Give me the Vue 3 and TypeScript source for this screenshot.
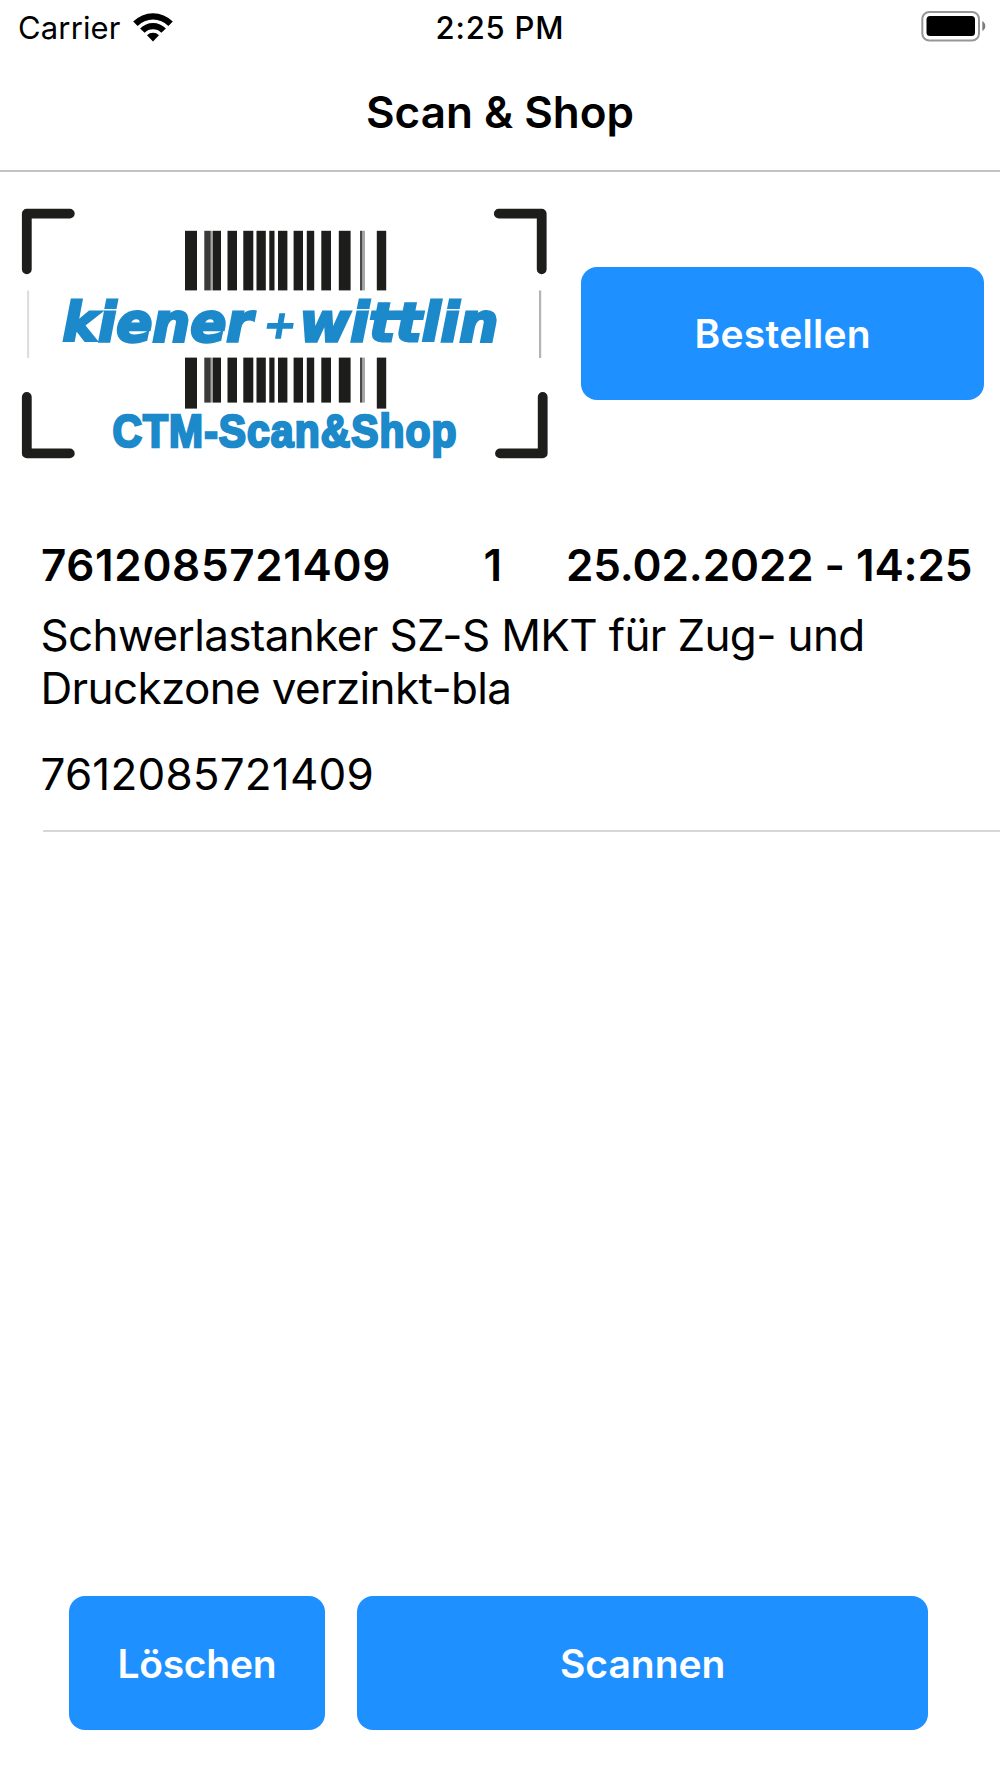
<script setup lang="ts">
interface Entry {
  code: string
  amount: number
  date: string
  description: string
  article: string
}

interface Bar {
  x: number
  w: number
  fill?: string
  long?: boolean
}

const entries: Entry[] = [
  {
    code: '7612085721409',
    amount: 1,
    date: '25.02.2022 - 14:25',
    description: 'Schwerlastanker SZ-S MKT für Zug- und Druckzone verzinkt-bla',
    article: '7612085721409',
  },
]

const bars: Bar[] = [
  { x: 185, w: 12, long: true },
  { x: 204.3, w: 6.5, fill: '#3a3a38' },
  { x: 210.8, w: 2, fill: '#a5a5a5' },
  { x: 212.8, w: 8.2 },
  { x: 227.5, w: 9.5 },
  { x: 243.3, w: 10 },
  { x: 256.5, w: 9.3 },
  { x: 269.3, w: 5.2 },
  { x: 278, w: 9.4 },
  { x: 293.6, w: 9.4 },
  { x: 306.8, w: 7.4 },
  { x: 321.3, w: 9.7 },
  { x: 338.8, w: 11.8 },
  { x: 360, w: 2.6, fill: '#4a4a48' },
  { x: 362.6, w: 2.4, fill: '#a8a8a8' },
  { x: 376.8, w: 9.4, long: true },
]
</script>

<template>
  <div class="screen">
    <header>
      <div class="status">
        <div class="carrier">
          <span class="carrier-name">Carrier</span>
          <svg class="wifi" width="42" height="32" viewBox="132 11 42 32">
            <path d="M133.2 21.6a27.9 27.9 0 0 1 39.6 0l-4.4 4.3a21.8 21.8 0 0 0-30.8 0z" />
            <path d="M140.1 28.4a18.2 18.2 0 0 1 25.8 0l-4.5 4.4a11.9 11.9 0 0 0-16.8 0z" />
            <path d="M147 35.2a8.5 8.5 0 0 1 12 0l-6 6.2z" />
          </svg>
        </div>
        <span class="time">2:25 PM</span>
        <svg class="battery" width="66" height="32" viewBox="921 10 66 32">
          <rect x="922.3" y="12" width="56.7" height="28.6" rx="7" fill="none" stroke="#969696" stroke-width="2" />
          <rect x="926.5" y="16" width="48.5" height="20" rx="3.5" />
          <path d="M982.3 21c4 2 4 8 0 10z" fill="#7d7d7d" />
        </svg>
      </div>
      <h1><span>Scan &amp; Shop</span></h1>
    </header>

    <section class="top">
      <svg class="logo" width="530" height="256" viewBox="20 206 530 256">
        <g fill="none" stroke="#1d1d1b" stroke-width="9.8" stroke-linecap="round" stroke-linejoin="round">
          <path d="M69.8 213.6H26.8V269.3" />
          <path d="M498.8 213.6H541.7V269.3" />
          <path d="M26.8 397V453.4H69.8" />
          <path d="M500 453.4H542.7V397" />
        </g>
        <rect x="27" y="290.5" width="2.2" height="67.5" fill="#dedede" />
        <rect x="539" y="290.5" width="2.2" height="67.5" fill="#b3b3b3" />
        <g v-for="bar in bars" :key="bar.x" :fill="bar.fill ?? '#1d1d1b'">
          <rect :x="bar.x" y="230.8" :width="bar.w" height="59.6" />
          <rect :x="bar.x" y="357.6" :width="bar.w" :height="bar.long ? 51 : 45" />
        </g>
        <g class="brand">
          <text x="62.5" y="340.8" textLength="190" lengthAdjust="spacingAndGlyphs">kiener</text>
          <text class="plus" x="262" y="341" textLength="36" lengthAdjust="spacingAndGlyphs">+</text>
          <text x="299.5" y="340.8" textLength="199" lengthAdjust="spacingAndGlyphs">wittlin</text>
        </g>
        <text class="product" x="112.5" y="447.3" textLength="345" lengthAdjust="spacingAndGlyphs">CTM-Scan&amp;Shop</text>
      </svg>
      <button class="order" type="button"><span>Bestellen</span></button>
    </section>

    <main>
      <article v-for="entry in entries" :key="entry.code">
        <div class="head">
          <span class="code">{{ entry.code }}</span>
          <span class="amount">{{ entry.amount }}</span>
          <span class="date">{{ entry.date }}</span>
        </div>
        <p class="description">{{ entry.description }}</p>
        <p class="number">{{ entry.article }}</p>
      </article>
    </main>

    <footer>
      <button class="delete" type="button"><span>Löschen</span></button>
      <button class="scan" type="button"><span>Scannen</span></button>
    </footer>
  </div>
</template>

<style>
body {
  background: #fff;
}
</style>

<style scoped>
.screen {
  display: flex;
  flex-direction: column;
  box-sizing: border-box;
  width: 1000px;
  height: 1778px;
  overflow: hidden;
  background: #fff;
  color: #000;
  font-family: Inter, 'Liberation Sans', sans-serif;
}

header {
  box-sizing: border-box;
  height: 172px;
  border-bottom: 2px solid #c3c3c3;
}

.status {
  display: grid;
  grid-template-columns: 1fr auto 1fr;
  height: 54px;
  padding: 0 13px 0 18px;
  font-size: 31px;
  line-height: 56px;
}

.carrier {
  display: flex;
  gap: 11px;
  letter-spacing: 0.15px;
}

.wifi,
.battery {
  margin-top: 11px;
}

.battery {
  margin-top: 10px;
  justify-self: end;
}

.time {
  font-weight: 500;
  letter-spacing: 0.8px;
  margin-right: 5px;
}

h1 {
  margin: 0;
  height: 116px;
  text-align: center;
  font-size: 44px;
  font-weight: 600;
  line-height: 116px;
}

.top {
  display: flex;
  align-items: flex-start;
  height: 358px;
  box-sizing: border-box;
  padding: 34px 16px 0 20px;
}

.logo {
  flex: none;
}

.brand {
  fill: #1b89ca;
  stroke: #1b89ca;
  stroke-width: 2.8;
  font-family: 'DejaVu Sans', sans-serif;
  font-size: 53px;
  font-style: italic;
  font-weight: 700;
}

.plus {
  font-family: Inter, sans-serif;
  font-size: 52px;
  font-weight: 600;
  stroke-width: 0;
}

.product {
  fill: #1b89ca;
  stroke: #1b89ca;
  stroke-width: 2.6;
  font-family: 'Liberation Sans', Arial, sans-serif;
  font-size: 46px;
  font-weight: 700;
  letter-spacing: 1.2px;
}

button {
  display: flex;
  align-items: center;
  justify-content: center;
  box-sizing: border-box;
  height: 133.3px;
  padding: 2px 0 0;
  border: 0;
  border-radius: 16px;
  background: #1e90ff;
  color: #fff;
  font: 600 39px/48px Inter, 'Liberation Sans', sans-serif;
}

.order {
  width: 402.6px;
  margin: 60.5px 0 0 auto;
  letter-spacing: 0.25px;
}

main {
  flex: 1;
}

article {
  margin-left: 43px;
  border-bottom: 2px solid #d6d6d6;
  height: 300px;
}

.head {
  display: grid;
  grid-template-columns: 442.5px 82.5px auto;
  justify-content: start;
  height: 70px;
  margin-left: -2px;
  line-height: 71px;
  font-size: 44px;
  font-weight: 600;
}

.code {
  letter-spacing: 0.65px;
}

.date {
  letter-spacing: -0.1px;
}

p {
  margin: 0 0 0 -2.5px;
  font-size: 44px;
}

.description {
  width: 880px;
  line-height: 53.3px;
  margin-top: 8.6px;
  letter-spacing: -0.64px;
}

.number {
  margin-top: 33px;
  line-height: 53.3px;
  letter-spacing: 0.18px;
}

footer {
  display: flex;
  gap: 32px;
  padding: 0 72px 48.3px 69.4px;
}

.delete {
  width: 256px;
  letter-spacing: -0.25px;
}

.delete span {
  margin-right: 1px;
}

.scan {
  flex: 1;
}
</style>
